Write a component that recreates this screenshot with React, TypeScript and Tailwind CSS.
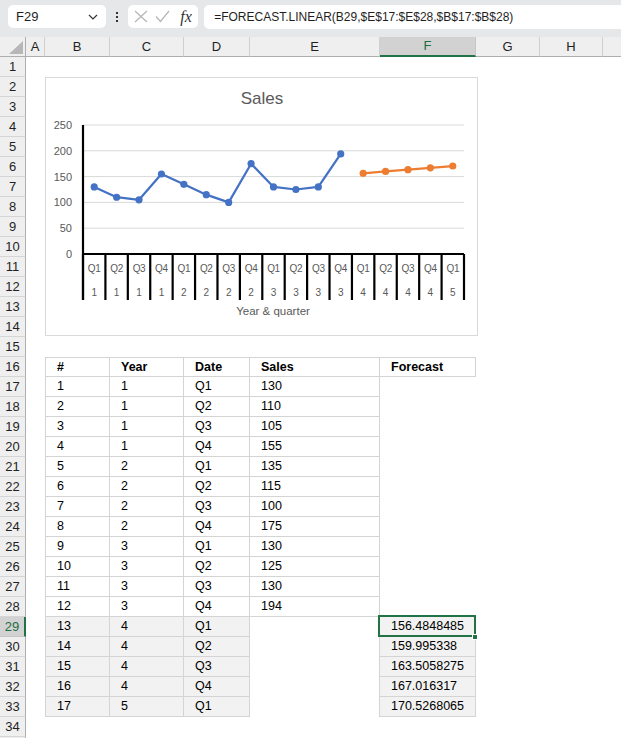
import React from "react";

const FONT = "font-['Liberation_Sans',Arial,sans-serif]";

const sales = [130, 110, 105, 155, 135, 115, 100, 175, 130, 125, 130, 194];
const forecast = ["156.4848485", "159.995338", "163.5058275", "167.016317", "170.5268065"];
const fcVals = [156.4848485, 159.995338, 163.5058275, 167.016317, 170.5268065];
const qs = ["Q1", "Q2", "Q3", "Q4"];

const BASE = "flex items-center pl-[11px] text-[12.5px] text-black whitespace-nowrap";
const HEAD_FIRST = "border-l border-t border-r border-b border-[#d4d4d4] font-bold bg-white";
const HEAD = "border-t border-r border-b border-[#d4d4d4] font-bold bg-white";
const W_FIRST = "border-l border-r border-b border-[#d4d4d4] bg-white";
const W_MID = "border-r border-b border-[#d4d4d4] bg-white";
const G_FIRST = "border-l border-r border-b border-[#d4d4d4] bg-[#f2f2f2]";
const G_MID = "border-r border-b border-[#d4d4d4] bg-[#f2f2f2]";
const R_ONLY = "border-r border-[#d4d4d4]";
const B_ONLY = "border-b border-[#d4d4d4]";

function cell(r: number, c: number): { text: string; cls: string } {
  if (c < 2 || c > 6 || r < 16) return { text: "", cls: "" };
  if (r === 16) {
    const h = ["#", "Year", "Date", "Sales", "Forecast"][c - 2];
    return { text: h, cls: c === 2 ? HEAD_FIRST : HEAD };
  }
  if (r > 33) return { text: "", cls: "" };
  const n = r - 16;
  const year = String(Math.floor((n - 1) / 4) + 1);
  const q = qs[(n - 1) % 4];
  if (r <= 28) {
    if (c === 6) return { text: "", cls: r === 28 ? B_ONLY : "" };
    const t = [String(n), year, q, String(sales[n - 1])][c - 2];
    return { text: t, cls: c === 2 ? W_FIRST : W_MID };
  }
  if (c === 5) return { text: "", cls: R_ONLY };
  if (c === 6) return { text: forecast[r - 29], cls: G_MID };
  const t = [String(n), year, q][c - 2];
  return { text: t, cls: c === 2 ? G_FIRST : G_MID };
}

function Chart() {
  const x0 = 38;
  const x1 = 419;
  const n = 17;
  const w = (x1 - x0) / n;
  const y0 = 177;
  const k = 129 / 250;
  const cx = (i: number) => x0 + w * (i + 0.5);
  const cy = (v: number) => y0 - v * k;
  const font = "Liberation Sans, Arial, sans-serif";
  const bluePts = sales.map((v, i) => `${cx(i)},${cy(v)}`).join(" ");
  const orPts = fcVals.map((v, i) => `${cx(i + 12)},${cy(v)}`).join(" ");
  const quarters = Array.from({ length: 17 }, (_, i) => qs[i % 4]);
  const years = Array.from({ length: 17 }, (_, i) => String(Math.floor(i / 4) + 1));
  return (
    <svg width="433" height="259" viewBox="0 0 433 259" className="block">
      <rect x="0.5" y="0.5" width="432" height="258" fill="white" stroke="#d9d9d9" />
      <text x="217" y="27" fontSize="17" fill="#595959" textAnchor="middle" fontFamily={font}>
        Sales
      </text>
      {[50, 100, 150, 200, 250].map((v) => (
        <line key={v} x1={x0} x2={x1} y1={cy(v)} y2={cy(v)} stroke="#d9d9d9" strokeWidth="1" />
      ))}
      {[0, 50, 100, 150, 200, 250].map((v) => (
        <text key={v} x="27" y={cy(v) + 4} fontSize="11" fill="#595959" textAnchor="end" fontFamily={font}>
          {v}
        </text>
      ))}
      <line x1={x0} x2={x0} y1={48} y2={223} stroke="black" strokeWidth="2.2" />
      <line x1={x0} x2={x1} y1={y0} y2={y0} stroke="black" strokeWidth="2.2" />
      {Array.from({ length: 18 }, (_, i) => (
        <line key={i} x1={x0 + w * i} x2={x0 + w * i} y1={y0} y2={223} stroke="black" strokeWidth="2.2" />
      ))}
      {quarters.map((q, i) => (
        <text key={"q" + i} x={cx(i)} y="195" fontSize="10" letterSpacing="-0.3" fill="#595959" textAnchor="middle" fontFamily={font}>
          {q}
        </text>
      ))}
      {years.map((y, i) => (
        <text key={"y" + i} x={cx(i)} y="219" fontSize="10" fill="#595959" textAnchor="middle" fontFamily={font}>
          {y}
        </text>
      ))}
      <text x="228" y="238" fontSize="11.5" fill="#595959" textAnchor="middle" fontFamily={font}>
        Year &amp; quarter
      </text>
      <polyline points={bluePts} fill="none" stroke="#4472c4" strokeWidth="2.25" strokeLinejoin="round" strokeLinecap="round" />
      {sales.map((v, i) => (
        <circle key={"b" + i} cx={cx(i)} cy={cy(v)} r="3.6" fill="#4472c4" />
      ))}
      <polyline points={orPts} fill="none" stroke="#ed7d31" strokeWidth="2.25" strokeLinejoin="round" strokeLinecap="round" />
      {fcVals.map((v, i) => (
        <circle key={"o" + i} cx={cx(i + 12)} cy={cy(v)} r="3.6" fill="#ed7d31" />
      ))}
    </svg>
  );
}

export default function App() {
  const rows = Array.from({ length: 35 }, (_, i) => i + 1);
  const colLetters = ["A", "B", "C", "D", "E", "F", "G", "H", ""];
  return (
    <div className={`relative w-[621px] h-[738px] overflow-hidden bg-white ${FONT}`}>
      {/* formula bar */}
      <div className="h-[37px] bg-[#e6e7e9] flex items-start pt-[5px]">
        <div className="ml-[8px] w-[101px] h-[23px] rounded-[5px] bg-white flex items-center justify-between pl-[8px] pr-[8px]">
          <span className="text-[13px] text-[#1f1f1f]">F29</span>
          <svg width="10" height="6" viewBox="0 0 10 6">
            <path d="M1 1 L5 5 L9 1" fill="none" stroke="#333" strokeWidth="1.2" />
          </svg>
        </div>
        <div className="ml-[9px] h-[23px] flex flex-col items-center justify-center gap-[2px] w-[3px]">
          <div className="w-[2px] h-[2px] bg-[#333]" />
          <div className="w-[2px] h-[2px] bg-[#333]" />
          <div className="w-[2px] h-[2px] bg-[#333]" />
        </div>
        <div className="ml-[10px] w-[72px] h-[23px] rounded-[5px] bg-white flex items-center pl-[6px]">
          <svg width="14" height="13" viewBox="0 0 14 13">
            <path d="M1 1 L13 12 M13 1 L1 12" stroke="#b5b5b5" strokeWidth="1.2" fill="none" />
          </svg>
          <svg width="15" height="13" viewBox="0 0 15 13" className="ml-[7px]">
            <path d="M1 6.5 L5.5 11.5 L14 1" stroke="#b5b5b5" strokeWidth="1.2" fill="none" />
          </svg>
          <span className="ml-[10px] text-[16px] italic text-[#333] font-['Liberation_Serif',serif] leading-none">fx</span>
        </div>
        <div className="ml-[6px] w-[430px] h-[24px] rounded-l-[5px] bg-white flex items-center pl-[10px]">
          <span className="text-[12px] text-[#1f1f1f] whitespace-nowrap">=FORECAST.LINEAR(B29,$E$17:$E$28,$B$17:$B$28)</span>
        </div>
      </div>

      {/* sheet grid */}
      <div className="grid grid-cols-[26px_19px_65px_74px_66px_130px_96px_64px_63px_40px] auto-rows-[20px]">
        <div className="bg-[#efefef] border-r border-b border-[#aeaeae] flex items-end justify-end pr-[2px] pb-[2px]">
          <svg width="14" height="13" viewBox="0 0 14 13">
            <path d="M14 0 L14 13 L0 13 Z" fill="#b7b7b7" />
          </svg>
        </div>
        {colLetters.map((l, i) =>
          l === "F" ? (
            <div key={i} className="bg-[#d2d2d2] border-r border-[#c6c6c6] border-b-2 border-b-[#217346] flex items-center justify-center text-[13px] text-[#1e6e42]">
              {l}
            </div>
          ) : (
            <div key={i} className="bg-[#efefef] border-r border-[#d0d0d0] border-b border-b-[#aeaeae] flex items-center justify-center text-[13px] text-[#1f1f1f]">
              {l}
            </div>
          )
        )}
        {rows.map((r) => (
          <React.Fragment key={r}>
            {r === 29 ? (
              <div className="bg-[#d2d2d2] border-b border-[#c6c6c6] border-r-2 border-r-[#217346] flex items-center justify-center text-[13px] text-[#1e6e42]">
                {r}
              </div>
            ) : (
              <div className="bg-[#efefef] border-b border-[#d5d5d5] border-r border-r-[#aeaeae] flex items-center justify-center text-[13px] text-[#1f1f1f]">
                {r < 35 ? r : ""}
              </div>
            )}
            {Array.from({ length: 9 }, (_, j) => {
              const c = j + 1;
              const info = cell(r, c);
              if (r === 29 && c === 6) {
                return (
                  <div key={c} className={`relative ${BASE} ${info.cls}`}>
                    {info.text}
                    <div className="absolute left-[-2px] top-[-2px] right-[-1px] bottom-[-1px] border-2 border-[#217346]" />
                    <div className="absolute right-[-3px] bottom-[-4px] w-[6px] h-[6px] bg-[#217346] border border-white" />
                  </div>
                );
              }
              return (
                <div key={c} className={`${BASE} ${info.cls}`}>
                  {info.text}
                </div>
              );
            })}
          </React.Fragment>
        ))}
      </div>

      <div className="absolute left-[45px] top-[77px]">
        <Chart />
      </div>
    </div>
  );
}
